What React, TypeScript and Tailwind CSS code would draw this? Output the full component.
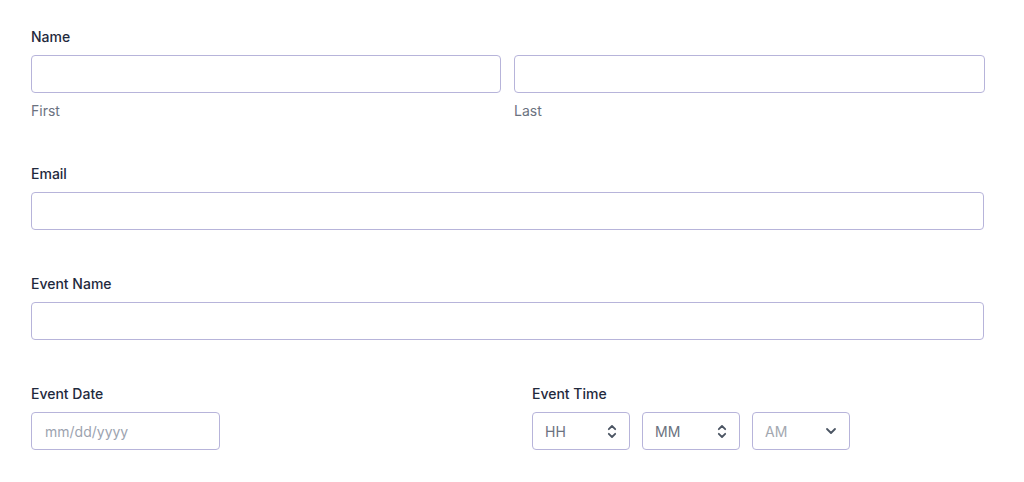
import React from "react";

const inputCls =
  "block h-[38px] w-full rounded-[4px] border border-[#b7b4da] bg-white px-[13px] text-[14px] text-[#374151] outline-none placeholder:text-[#9ca3af]";

function Label({ children }: { children: React.ReactNode }) {
  return (
    <div className="mb-[8px] text-[14px] leading-[20px] font-medium text-[#1f2a3d]">
      {children}
    </div>
  );
}

function UpDown() {
  return (
    <svg width="10" height="15" viewBox="0 0 10 15" fill="none" stroke="#4b5563" strokeWidth="1.8" strokeLinecap="round" strokeLinejoin="round">
      <path d="M1.8 5.2L5 2l3.2 3.2" />
      <path d="M1.8 9.8L5 13l3.2-3.2" />
    </svg>
  );
}

function Down() {
  return (
    <svg width="12" height="8" viewBox="0 0 12 8" fill="none" stroke="#4b5563" strokeWidth="1.8" strokeLinecap="round" strokeLinejoin="round">
      <path d="M2 2l4 4 4-4" />
    </svg>
  );
}

function TimeBox({ text, color, icon }: { text: string; color: string; icon: React.ReactNode }) {
  return (
    <div className="flex h-[38px] w-[98px] items-center justify-between rounded-[4px] border border-[#b7b4da] bg-white pl-[12px] pr-[12px]">
      <span className={`text-[14px] ${color}`}>{text}</span>
      {icon}
    </div>
  );
}

export default function App() {
  return (
    <div
      className="min-h-[482px] w-[1024px] bg-white pt-[27px] pl-[31px]"
      style={{ fontFamily: "Inter, 'Noto Sans', sans-serif" }}
    >
      <div className="w-[954px]">
        <Label>Name</Label>
        <div className="grid grid-cols-[470px_1fr] gap-x-[13px]">
          <div>
            <input className={inputCls} />
            <div className="mt-[8px] text-[14px] leading-[20px] text-[#6b7280]">First</div>
          </div>
          <div>
            <input className={inputCls} />
            <div className="mt-[8px] text-[14px] leading-[20px] text-[#6b7280]">Last</div>
          </div>
        </div>

        <div className="mt-[43px] w-[953px]">
          <Label>Email</Label>
          <input className={inputCls} />
        </div>

        <div className="mt-[44px] w-[953px]">
          <Label>Event Name</Label>
          <input className={inputCls} />
        </div>

        <div className="mt-[44px] grid grid-cols-2 gap-x-[48px]">
          <div>
            <Label>Event Date</Label>
            <input className={`${inputCls} w-[189px]`} placeholder="mm/dd/yyyy" style={{ width: 189 }} />
          </div>
          <div>
            <Label>Event Time</Label>
            <div className="flex gap-[12px]">
              <TimeBox text="HH" color="text-[#6b7280]" icon={<UpDown />} />
              <TimeBox text="MM" color="text-[#6b7280]" icon={<UpDown />} />
              <TimeBox text="AM" color="text-[#a3a8b0]" icon={<Down />} />
            </div>
          </div>
        </div>
      </div>
    </div>
  );
}
